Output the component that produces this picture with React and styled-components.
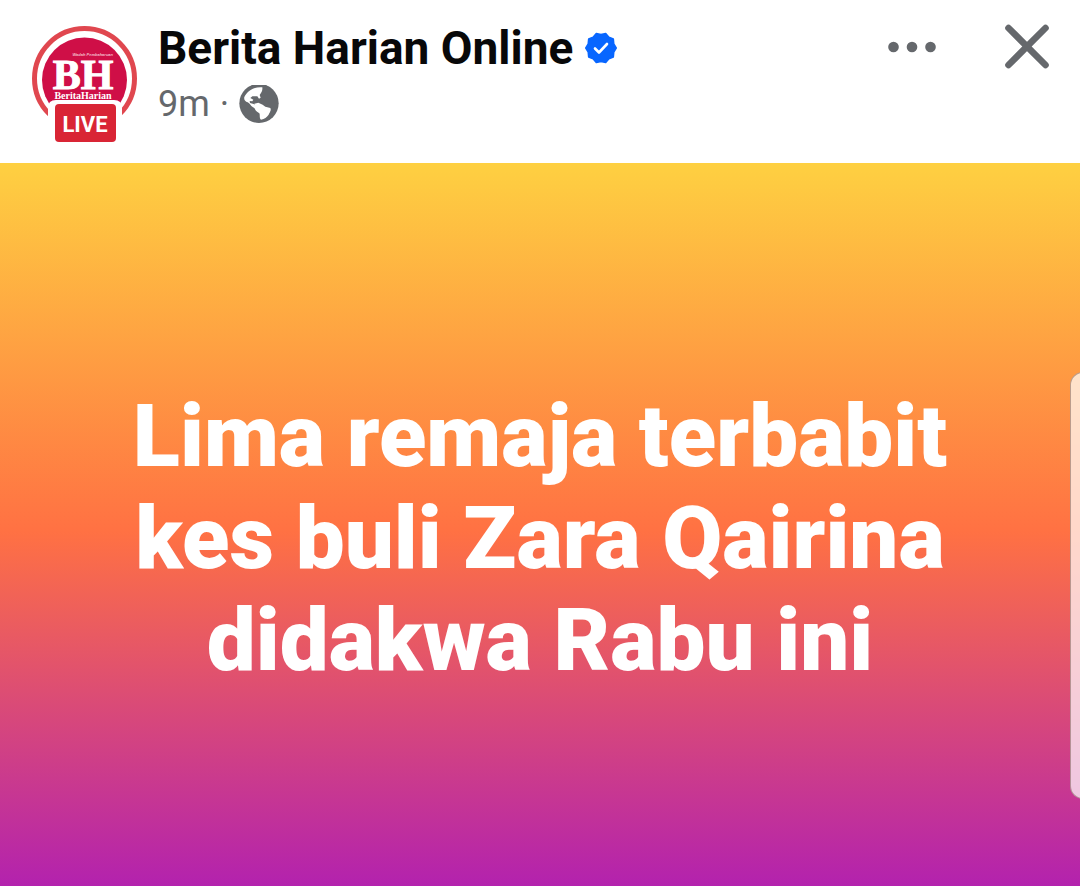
import React from 'react';
import styled, { createGlobalStyle } from 'styled-components';

const GlobalStyle = createGlobalStyle`
  * {
    box-sizing: border-box;
  }

  body {
    margin: 0;
    background: #fff;
    font-family: Roboto, 'Liberation Sans', sans-serif;
  }
`;

const Post = styled.article`
  position: relative;
  display: flex;
  flex-direction: column;
  min-height: 100vh;
  overflow: hidden;
`;

const Header = styled.header`
  display: flex;
  align-items: flex-start;
  gap: 20px;
  padding: 24px 28px 20px 32px;
`;

const AvatarLink = styled.a`
  display: block;
  flex: none;

  svg {
    display: block;
  }
`;

const Info = styled.div`
  flex: 1;
  min-width: 0;
`;

const NameRow = styled.div`
  display: flex;
  align-items: center;
  gap: 12px;
`;

const Name = styled.h1`
  margin: 0;
  font-size: 46px;
  line-height: 48px;
  font-weight: 700;

  a {
    color: #080809;
    text-decoration: none;
  }
`;

const Meta = styled.div`
  display: flex;
  align-items: center;
  gap: 10px;
  padding-top: 12px;
  font-size: 36px;
  line-height: 40px;
  color: #65686c;
`;

const Actions = styled.div`
  display: flex;
  align-items: center;
  gap: 66px;
`;

const IconButton = styled.button`
  display: block;
  padding: 0;
  border: 0;
  background: none;
  color: #65686c;
  cursor: pointer;

  svg {
    display: block;
  }
`;

const Canvas = styled.section`
  flex: 1;
  display: flex;
  align-items: center;
  justify-content: center;
  padding: 26px 100px 0;
  background: linear-gradient(#fed041 0%, #ff7143 51%, #b322ae 100%);
`;

const Message = styled.p`
  max-width: 860px;
  margin: 0;
  color: #fff;
  font-size: 87px;
  line-height: 102px;
  font-weight: 900;
  text-align: center;
`;

const EdgeHandle = styled.div`
  position: absolute;
  top: 372px;
  right: -16px;
  width: 26px;
  height: 427px;
  border: 1px solid rgba(120, 90, 80, 0.5);
  border-radius: 14px;
  background: rgba(255, 255, 255, 0.72);
`;

const Avatar = () => (
  <svg width="106" height="119" viewBox="0 0 106 119" role="img" aria-label="BH Live">
    <circle cx="52.5" cy="54.5" r="50" fill="#fff" stroke="#e0474f" strokeWidth="5" />
    <circle cx="52.5" cy="56" r="42.5" fill="#cf0f47" />
    <text x="81" y="32" textAnchor="end" fontFamily="Liberation Sans" fontSize="4" fontWeight="700" fontStyle="italic" fill="#f3b9c8">
      Wadah Pembaharuan
    </text>
    <text
      x="51"
      y="65"
      textAnchor="middle"
      fontFamily="Liberation Serif"
      fontSize="42"
      fontWeight="700"
      fill="#fff"
      stroke="#fff"
      strokeWidth="1"
    >
      BH
    </text>
    <text x="51" y="75" textAnchor="middle" fontFamily="Liberation Serif" fontSize="10" fontWeight="700" fill="#fff">
      BeritaHarian
    </text>
    <path d="M16 119V84q0-8 8-8h58q8 0 8 8v35z" fill="#fff" />
    <rect x="23" y="80" width="61" height="38" rx="4" fill="#d92535" />
    <text x="53" y="108" textAnchor="middle" fontFamily="Roboto" fontSize="22" fontWeight="700" fill="#fff">
      LIVE
    </text>
  </svg>
);

// ten-lobed rosette, one lobe pointing straight left and one straight right
const rosette = Array.from({ length: 20 }, (_, i) => {
  const radius = i % 2 ? 13.4 : 15.2;
  const angle = (i * Math.PI) / 10;
  return `${(16 + radius * Math.cos(angle)).toFixed(2)},${(16 + radius * Math.sin(angle)).toFixed(2)}`;
}).join(' ');

const VerifiedIcon = () => (
  <svg width="32" height="32" viewBox="0 0 32 32" role="img" aria-label="Verified">
    <polygon points={rosette} fill="#0866ff" stroke="#0866ff" strokeWidth="1.6" strokeLinejoin="round" />
    <path d="M10 16.5l4 4 8-8.5" fill="none" stroke="#fff" strokeWidth="2.6" strokeLinecap="round" strokeLinejoin="round" />
  </svg>
);

const GlobeIcon = () => (
  <svg width="40" height="38" viewBox="271 195 120 114" role="img" aria-label="Public">
    <circle cx="331" cy="250" r="59" fill="#65686c" />
    <path
      d="M341 202c-24-2-44 9-54 29-2 8 3 13 10 16 7 4 8 10 16 15l8 4 1-7-7-7-11-3-1-6 8 1 3-5-9-5 6-5 15 0 5 7 5-3-3-8c6-8 9-13 8-23z"
      fill="#fff"
    />
    <path d="M317 251l12-3 13 6 8 6 15 4c4 8-3 14-5 20-6 7-12 13-23 15-6-5-2-13-5-19-8-5-14-10-15-18z" fill="#fff" />
  </svg>
);

const MoreIcon = () => (
  <svg width="48" height="44" viewBox="0 0 48 44" fill="currentColor" aria-hidden="true">
    <circle cx="5.5" cy="22" r="5.3" />
    <circle cx="24" cy="22" r="5.3" />
    <circle cx="42.5" cy="22" r="5.3" />
  </svg>
);

const CloseIcon = () => (
  <svg width="50" height="46" viewBox="0 0 50 46" fill="none" aria-hidden="true">
    <path d="M6.5 4l37 37M43.5 4l-37 37" stroke="currentColor" strokeWidth="6.6" strokeLinecap="round" />
  </svg>
);

const App = () => (
  <>
    <GlobalStyle />
    <Post>
      <Header>
        <AvatarLink href="#profile">
          <Avatar />
        </AvatarLink>
        <Info>
          <NameRow>
            <Name>
              <a href="#profile">Berita Harian Online</a>
            </Name>
            <VerifiedIcon />
          </NameRow>
          <Meta>
            <time>9m</time>
            <span>·</span>
            <GlobeIcon />
          </Meta>
        </Info>
        <Actions>
          <IconButton type="button" aria-label="More options">
            <MoreIcon />
          </IconButton>
          <IconButton type="button" aria-label="Close">
            <CloseIcon />
          </IconButton>
        </Actions>
      </Header>
      <Canvas>
        <Message>Lima remaja terbabit kes buli Zara Qairina didakwa Rabu ini</Message>
      </Canvas>
      <EdgeHandle />
    </Post>
  </>
);

export default App;
